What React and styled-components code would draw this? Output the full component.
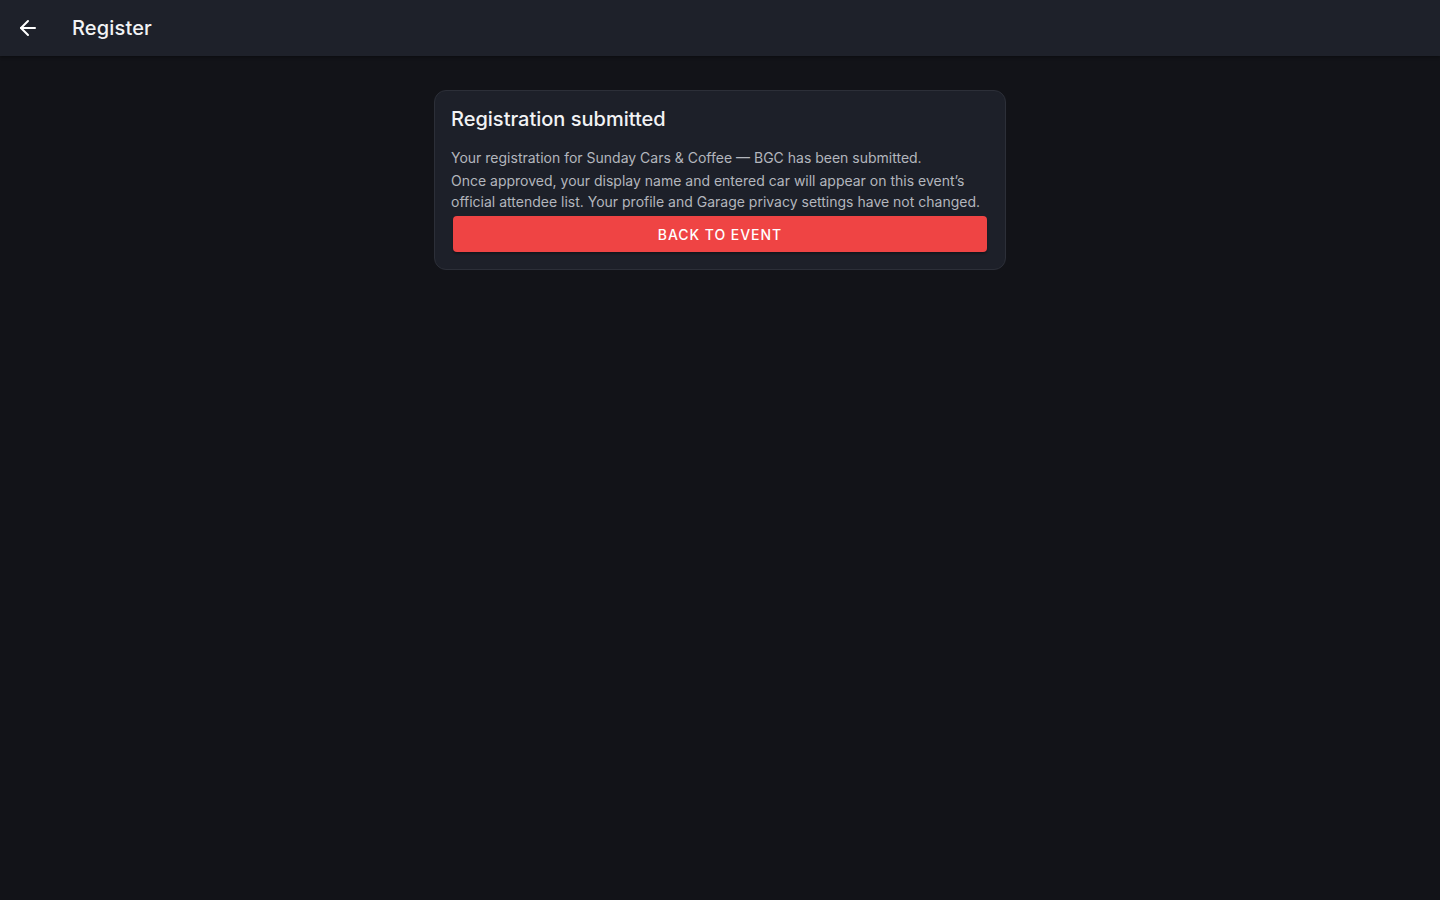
import styled, { createGlobalStyle } from "styled-components";
import { ArrowLeft } from "lucide-react";

const GlobalStyle = createGlobalStyle`
  * { box-sizing: border-box; }
  body {
    margin: 0;
    background: #121318;
    font-family: Inter, "Noto Sans", sans-serif;
    color: #e6e7ea;
  }
`;

const Page = styled.div`
  min-height: 100vh;
  background: #121318;
`;

const TopBar = styled.header`
  height: 56px;
  background: #1e212a;
  display: flex;
  align-items: center;
  padding: 0 16px;
  gap: 32px;
  box-shadow: 0 1px 3px rgba(0, 0, 0, 0.4);
`;

const BackButton = styled.button`
  border: none;
  background: none;
  padding: 0;
  color: #ffffff;
  display: flex;
  cursor: pointer;
`;

const Title = styled.h1`
  margin: 0;
  font-size: 20px;
  font-weight: 500;
  color: #f2f3f5;
  letter-spacing: 0.15px;
`;

const Main = styled.main`
  display: flex;
  justify-content: center;
  padding-top: 34px;
`;

const Card = styled.section`
  width: 572px;
  background: #1d2029;
  border: 1px solid #2c2f38;
  border-radius: 12px;
  padding: 16px;
`;

const CardTitle = styled.h2`
  margin: 0 0 16px;
  font-size: 20px;
  line-height: 24px;
  font-weight: 500;
  color: #f2f3f5;
`;

const Text = styled.p`
  margin: 0 0 ${({ $gap }) => $gap || 0}px;
  font-size: 14px;
  line-height: 21px;
  color: #b3b6bd;
`;

const ActionButton = styled.button`
  display: block;
  width: calc(100% - 4px);
  margin: 4px 2px 1px;
  height: 36px;
  padding: 0;
  border: none;
  border-radius: 4px;
  background: #ef4444;
  color: #ffffff;
  font-family: Inter, "Noto Sans", sans-serif;
  font-size: 14px;
  font-weight: 500;
  letter-spacing: 0.95px;
  text-transform: uppercase;
  box-shadow: 0 2px 2px rgba(0, 0, 0, 0.3);
  cursor: pointer;
`;

export default function App() {
  return (
    <Page>
      <GlobalStyle />
      <TopBar>
        <BackButton aria-label="Back">
          <ArrowLeft size={24} strokeWidth={2} />
        </BackButton>
        <Title>Register</Title>
      </TopBar>
      <Main>
        <Card>
          <CardTitle>Registration submitted</CardTitle>
          <Text $gap={2}>
            Your registration for Sunday Cars &amp; Coffee — BGC has been submitted.
          </Text>
          <Text>
            Once approved, your display name and entered car will appear on this event’s
            official attendee list. Your profile and Garage privacy settings have not changed.
          </Text>
          <ActionButton>Back to event</ActionButton>
        </Card>
      </Main>
    </Page>
  );
}
